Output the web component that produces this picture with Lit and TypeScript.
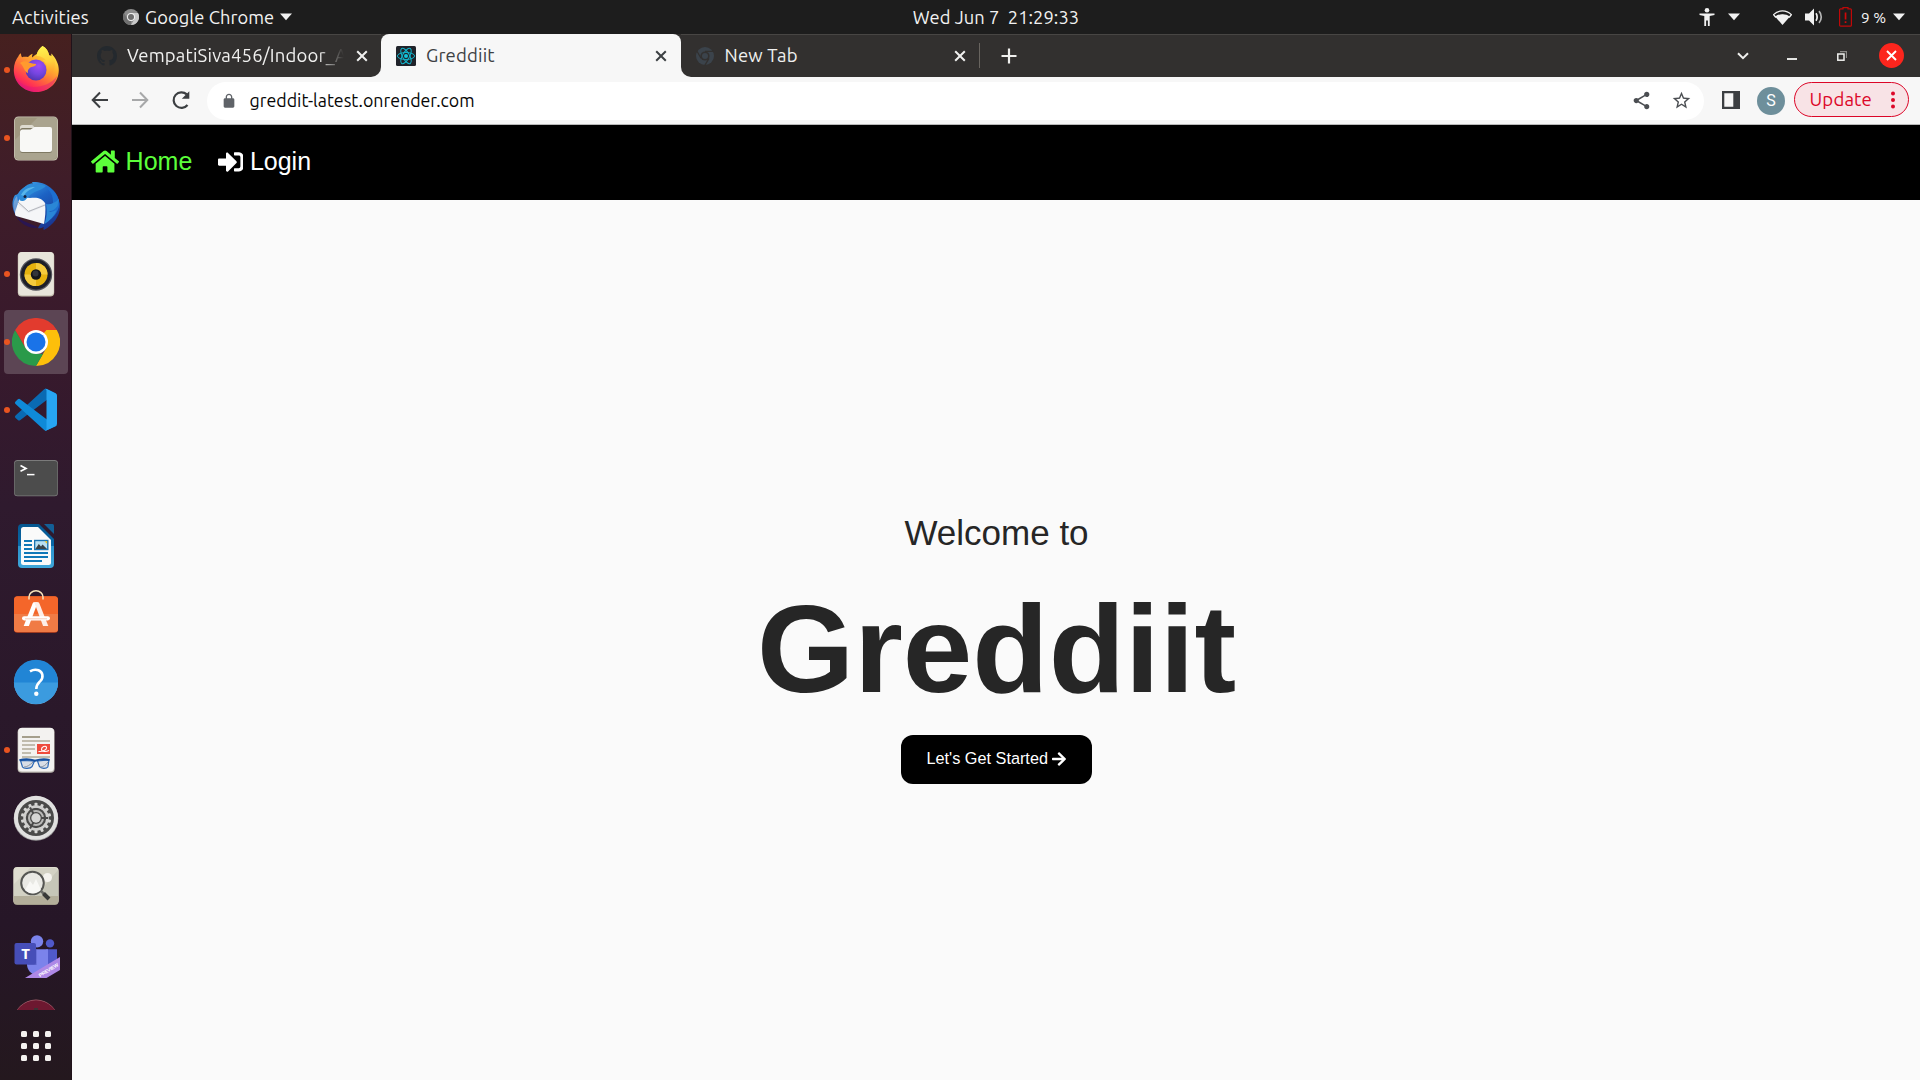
import { LitElement, html, svg, css } from "lit";
import { customElement } from "lit/decorators.js";
import { classMap } from "lit/directives/class-map.js";

const shared = css`
  :host, * { box-sizing: border-box; }
  svg { display: block; flex: none; }
  .ui { font-family: Ubuntu, "Noto Sans", "Open Sans", sans-serif; white-space: pre; }
`;

const triangle = html`<svg class="tri" width="12" height="8" viewBox="0 0 12 8"><path d="M0 .5h12L6 7.2z" fill="#f2f2f2"/></svg>`;

/* ---------- launcher icons, 48 x 48 ---------- */

const firefox = svg`
  <defs>
    <linearGradient id="ffBody" x1=".8" y1=".1" x2=".25" y2="1">
      <stop offset="0" stop-color="#fff44f"/><stop offset=".3" stop-color="#ffb02e"/>
      <stop offset=".58" stop-color="#ff6a3c"/><stop offset=".82" stop-color="#ff2f55"/><stop offset="1" stop-color="#d9127e"/>
    </linearGradient>
    <linearGradient id="ffFlame" x1=".5" y1="0" x2=".6" y2="1">
      <stop offset="0" stop-color="#fff44f"/><stop offset=".5" stop-color="#ffd03b"/><stop offset="1" stop-color="#ff8a2a" stop-opacity=".2"/>
    </linearGradient>
    <radialGradient id="ffGlobe" cx=".62" cy=".3" r=".8">
      <stop offset="0" stop-color="#a04bf5"/><stop offset=".5" stop-color="#7545e0"/><stop offset="1" stop-color="#4a32a8"/>
    </radialGradient>
  </defs>
  <path d="M30.500 0c4 2.200 6 5.500 6.700 9.600 1-.4 1.500.2 2.200.9.500-1 .3-2 0-3C44 12.500 46.800 18 46.800 24 46.800 36.500 37 46 24.300 46 11.500 46 1.800 36.500 1.800 24c0-6 2.200-10.500 4.800-14 .3-.8.6-1.800 2.400-2.700 0 1.600.2 2.700 1 3.900 2-.6 4-.5 6-.1 1.400-1.600 3-2.700 4.700-3.300-.5 1.200-.8 2.400-.5 3.700 1.400-1.800 3-2.800 4.600-3.600C25.500 5 27.800 2.200 30.500 0z" fill="url(#ffBody)"/>
  <circle cx="24" cy="24" r="10.500" fill="url(#ffGlobe)"/>
  <path d="M30.500 0c-3.500 3-5.600 6.200-6 10 4-.2 7.500 1.500 9.500 4.500-1.400-.6-2.500-.7-3.300-.5 6 4.500 5.800 13 .5 18 7-1 11.600-6 11.800-14 .2-3-.8-6.600-3.600-10.500.2 1.200.2 2.200 0 3-.7-.7-1.200-1.300-2.200-.9C36.500 5.500 34.500 2.200 30.500 0z" fill="url(#ffFlame)"/>
  <path d="M8 17c2.500-2 6-2.400 9-.6 2 1 4.600 1 7 1.500.6 1.600-2 2.300-4.300 3-2.300.8-4.600 3-3.600 6.400C12 26 12 20 8 17z" fill="#ff9a2e"/>
  <path d="M2 26c2 9 10 15 20 15 9 0 18-4 23-11-2 10-11 16-21 16C13 46 3.500 38 2 26z" fill="#e3197a" opacity=".45"/>`;

const files = svg`
  <rect x="2" y="2.500" width="44" height="44" rx="4.500" fill="#c9c5b5"/>
  <rect x="2.800" y="3.300" width="42.400" height="42.400" rx="4" fill="#a09880"/>
  <path d="M2.800 26 26 3.300h15a4 4 0 0 1 4 4V41a4 4 0 0 1-4 4H7a4 4 0 0 1-4-4z" fill="#aaa48f"/>
  <path d="M8 13.500a2.500 2.500 0 0 1 2.500-2.500h8c2 0 2.500 0 4 2.500H37V22H8z" fill="#dedbd0"/>
  <rect x="8" y="14" width="32" height="25" rx="2.500" fill="#7f7963"/>
  <path d="M8 18c0-1.400 1-2.500 2.500-2.500h8L22.500 13H38a2 2 0 0 1 2 2v20.500a2.500 2.500 0 0 1-2.500 2.500h-27A2.500 2.500 0 0 1 8 35.500z" fill="#f8f8f6"/>`;

const thunderbird = svg`
  <defs>
    <linearGradient id="tb" x1=".2" y1="0" x2=".8" y2="1">
      <stop offset="0" stop-color="#3fa5e8"/><stop offset=".4" stop-color="#1c62c4"/><stop offset="1" stop-color="#18318c"/>
    </linearGradient>
  </defs>
  <path d="M20 0c13-1 27 8 28 24 .4 9-6 19-16 24-1-1-.5-2 0-3-3 1.500-5 1.500-6 1 1-3 4-5 5-8L4 34C0 27-1 19 3 13c2 0 3-1 4-3 3-4 8-7 14-8z" fill="url(#tb)"/>
  <path d="M28 3c8 2 13 8 13 17 0 6-2 13-8 20 8-3 13-9 14.500-18C46 10 38 4 28 3z" fill="#1e6fd0"/>
  <path d="M34 22c4 1 9-1 13-5l-1.500 7c-2 3-5 5-9 6 3 0 6-1 8-2-2 6-7 11-12 14 2-6 3-12 1.500-20z" fill="#2a86d6"/>
  <path d="M8 15 3 30c0 2 0 3 1 4l28 8c1-6 2-13 1-21-3-5-8-6-15-5z" fill="#f5f6f8"/>
  <path d="M6 20 16.500 29.500 33 23" fill="none" stroke="#9b9da3" stroke-width="1"/>
  <path d="M33.500 21 33 24 16.500 31 5 22l-1 11c-4-7-3-15 1-19L6 20l10.500 9z" fill="#d9dce3" opacity=".4"/>
  <path d="M7 17C7 9 13 2 21 1l-1 3c5-2 10-2 14 0-4 4-8 4-13 7-6 3-7 9-11 8-2 0-2-1-3-2z" fill="#2d8cd8"/>
  <path d="M9 13c3-6 8-8 14-8-5 3-9 4-11 9z" fill="#57b5ea"/>
  <circle cx="13" cy="14.500" r="1.500" fill="#14213f"/>
  <path d="M4 34c4 4 12 7 22 11-1 1-3 1-4 1C14 45 8 41 4 34z" fill="#2a1652"/>`;

const rhythmbox = svg`
  <rect x="5.800" y="2" width="36.400" height="44.500" rx="4" fill="#c8c3b3"/>
  <rect x="6.300" y="2" width="35.400" height="43.200" rx="4" fill="#e8e5db"/>
  <circle cx="24" cy="24.500" r="16.200" fill="#55555d"/>
  <circle cx="24" cy="24.500" r="15" fill="#1d1f28"/>
  <circle cx="24" cy="24.500" r="11.500" fill="#e6b30e"/>
  <path d="M24 13a11.500 11.500 0 0 1 11.500 11.500L24 24.500zM24 36a11.500 11.500 0 0 1-11.500-11.500H24z" fill="#f4cb3d"/>
  <circle cx="24" cy="24.500" r="5.200" fill="#15161a"/>
  <circle cx="23.500" cy="23.500" r="3" fill="#33343a"/>`;

const chrome = svg`
  <path d="M24 24 3.200 12A24 24 0 0 1 44.800 12z" fill="#e23b2e"/>
  <path d="M24 12h20.800A24 24 0 0 1 24 48l10.400-18z" fill="#fdbf0b"/>
  <path d="M3.200 12 13.600 30 24 36h6.900L24 48A24 24 0 0 1 3.200 12z" fill="#2a9a4a"/>
  <path d="M3.200 12 13.600 30l10.400-6 10.400-12z" fill="#e23b2e"/>
  <circle cx="24" cy="24" r="12" fill="#fff"/>
  <circle cx="24" cy="24" r="9.500" fill="#1a73e8"/>`;

const vscode = svg`
  <g transform="translate(3 2.700) scale(.42)">
    <path d="M96.461 10.796 75.857.876a6.230 6.230 0 0 0-7.107 1.207L1.299 63.583a4.170 4.170 0 0 0 .004 6.162l5.510 5.009a4.170 4.170 0 0 0 5.321.237L93.361 13.370c2.725-2.067 6.639-.124 6.639 3.297v-.240a6.250 6.250 0 0 0-3.539-5.631z" fill="#0a6ab3"/>
    <path d="m96.461 89.204-20.604 9.920a6.230 6.230 0 0 1-7.107-1.207L1.299 36.417a4.170 4.170 0 0 1 .004-6.162l5.510-5.009a4.170 4.170 0 0 1 5.321-.237L93.361 86.630c2.725 2.067 6.639.124 6.639-3.297v.240a6.250 6.250 0 0 1-3.539 5.631z" fill="#0f8ad8"/>
    <path d="M75.858 99.126a6.230 6.230 0 0 1-7.108-1.209c2.306 2.306 6.250.673 6.250-2.589V4.672c0-3.262-3.944-4.895-6.250-2.589A6.230 6.230 0 0 1 75.858.874l20.600 9.907A6.250 6.250 0 0 1 100 16.413v67.174a6.250 6.250 0 0 1-3.541 5.633z" fill="#27a5f2"/>
  </g>`;

const terminal = svg`
  <rect x="2" y="6" width="44" height="36.200" rx="3.500" fill="#7b7b7b"/>
  <rect x="2.600" y="7" width="42.800" height="34.400" rx="3" fill="#4c4c4c"/>
  <path d="m8.500 11.500 5.500 2.900-5.500 2.900" fill="none" stroke="#fff" stroke-width="1.700"/>
  <path d="M15 20.600h7.500" stroke="#fff" stroke-width="1.500"/>`;

const writer = svg`
  <defs><linearGradient id="wr" x1="0" y1="0" x2="0" y2="1">
    <stop offset="0" stop-color="#05568f"/><stop offset=".5" stop-color="#0a69a8"/><stop offset=".51" stop-color="#2b93cd"/><stop offset="1" stop-color="#3ea6d9"/>
  </linearGradient></defs>
  <path d="M10 2h17l15 15v25a4 4 0 0 1-4 4H10a4 4 0 0 1-4-4V6a4 4 0 0 1 4-4z" fill="url(#wr)"/>
  <path d="M11.500 5H26l13 13v22.500a2.500 2.500 0 0 1-2.500 2.500h-25A2.500 2.500 0 0 1 9 40.500v-33A2.500 2.500 0 0 1 11.500 5z" fill="#fafafa"/>
  <path d="M32 2h8.500A1.500 1.500 0 0 1 42 3.500V12z" fill="#135f96"/>
  <path d="M12 19h8M12 23h8M12 27h8M12 31h24M12 35h24M12 39h18" stroke="#1078b8" stroke-width="1.900"/>
  <rect x="22" y="17.800" width="14.500" height="10.400" fill="#1a74b2"/>
  <rect x="23.300" y="19.200" width="11.800" height="7.800" fill="#b8dff2"/>
  <path d="m23.300 27 3.500-5 2.200 2.500 1.500-2 4.600 4.500z" fill="#3a444a"/>
  <path d="M32.500 19.200h2.600v2.600z" fill="#f5c211"/>`;

const software = svg`
  <rect x="2" y="6.300" width="44" height="36.500" rx="3.500" fill="#c9481d"/>
  <rect x="2" y="6.300" width="44" height="35.800" rx="3.500" fill="#f4662a"/>
  <path d="M2 24h44v14.600a3.500 3.500 0 0 1-3.500 3.500h-37A3.500 3.500 0 0 1 2 38.600z" fill="#f07b45"/>
  <path d="M17 9.500V7a7 6.200 0 0 1 14 0v2.500" fill="none" stroke="#f7e3bb" stroke-width="1.500"/>
  <path d="M11.700 36h5.200L25.800 12.200h-3.600c-.8 0-1.300.5-1.600 1.200z" fill="#fff"/>
  <path d="M36.300 36h-5.200l-8.900-23.800h3.600c.8 0 1.300.5 1.600 1.200z" fill="#fdeee8"/>
  <rect x="10" y="26.200" width="28" height="4.200" rx="2.100" fill="#fff"/>
  <path d="M13 28.800h22" stroke="#f6cdbc" stroke-width="1"/>`;

const help = svg`
  <circle cx="24" cy="24.300" r="22" fill="#67b5e6"/>
  <circle cx="24" cy="23.700" r="22" fill="#2185d5"/>
  <path d="M2 24.500h44a22 21.500 0 0 1-44 0z" fill="#3b9bdf"/>
  <path d="M18 13.300c3-1.700 6-2 8.500-1 4.500 1.700 5.200 7 2 10.500-2.500 2.600-4.200 4-4.200 8.200" fill="none" stroke="#fff" stroke-width="2.600"/>
  <circle cx="24.300" cy="35.800" r="2.200" fill="#fff"/>`;

const documents = svg`
  <rect x="5.600" y="2.200" width="37" height="44.500" rx="4" fill="#b9b6ae"/>
  <rect x="6.200" y="1.800" width="35.800" height="43.800" rx="4" fill="#f3f2f0"/>
  <path d="M10 11h18" stroke="#a59f8c" stroke-width="2"/>
  <path d="M10 15h28M10 19h13M10 23h13M10 27h9M10 31h28" stroke="#c1bcae" stroke-width="1.800"/>
  <rect x="25" y="18" width="13" height="10" fill="#ee4b3c"/>
  <path d="M26.500 25.500c5 0 8.500-2 8-4.200-.8-2-5-.6-5 2 0 3 5 2.500 7.500 1.200" fill="none" stroke="#fff" stroke-width="1.100"/>
  <path d="M8.500 34.500 10.500 41c1 2 8 1.800 9.500-.3L22.500 35zM25.500 35l2 5.700c1.500 2.100 7 2.100 8.300.3L37 34z" fill="#d9dee6" stroke="#2c68b5" stroke-width="1.200"/>
  <path d="M7.500 34.300c5-1.500 11-1.200 15.500.5 5-1.700 10-2 14.500-.8" fill="none" stroke="#164f9e" stroke-width="2"/>
  <path d="M12 41c3 0 6-2 9-5M28 41c3 0 6-2 8-5" fill="none" stroke="#8b95a3" stroke-width="1"/>`;

const teeth = Array.from({ length: 14 }, (_, i) =>
  svg`<rect x="22.500" y="8.800" width="3" height="5" rx=".8" fill="#d6d6d4" transform=${`rotate(${(i * 360) / 14} 24 24)`}/>`);

const settings = svg`
  <circle cx="24" cy="24.500" r="22.300" fill="#9a9a9a"/>
  <circle cx="24" cy="23.800" r="22" fill="#e1e1e0"/>
  <circle cx="24" cy="24" r="18" fill="#4a4a49"/>
  ${teeth}
  <circle cx="24" cy="24" r="11.500" fill="none" stroke="#cfcfcd" stroke-width="2.600"/>
  <circle cx="24" cy="24" r="7" fill="none" stroke="#b9b9b7" stroke-width="2"/>
  <path d="M28 24h8M22 20.500l-4-7M22 27.500l-4 7" stroke="#4a4a49" stroke-width="2"/>
  <circle cx="24" cy="24" r="4.700" fill="#d6d6d4"/>`;

const imageViewer = svg`
  <rect x="1.400" y="5" width="45.200" height="38" rx="4" fill="#8f8a78"/>
  <rect x="1.400" y="5" width="45.200" height="37" rx="4" fill="#dfddd0"/>
  <path d="M2 22 18 6h24a4 4 0 0 1 4 4v24H2z" fill="#d3d2c4"/>
  <path d="M24 34 46 8v26z" fill="#c6c6b8"/>
  <path d="M1.400 34h45.200v4.500a4 4 0 0 1-4 4H5.400a4 4 0 0 1-4-4z" fill="#b3ae9a"/>
  <circle cx="35.500" cy="15.500" r="4.500" fill="#f4f3ee"/>
  <circle cx="20.500" cy="21" r="11.300" fill="#e9e9e4" stroke="#555653" stroke-width="2"/>
  <path d="m13 28 5-9 3 4 3-6 5 11c-5 5-12 4-16 0z" fill="#f8f8f5"/>
  <path d="m29 29 3 3" stroke="#6a6b68" stroke-width="2.500"/>
  <path d="m31.500 31.500 5.500 5.500" stroke="#383938" stroke-width="4"/>`;

const teams = svg`
  <defs><clipPath id="tmClip"><rect x="0" y="0" width="48" height="48"/></clipPath></defs>
  <circle cx="38" cy="13.400" r="4.200" fill="#5059c9"/>
  <path d="M34 19.300h11V34c0 5-3 8-8 8h-6z" fill="#5059c9"/>
  <circle cx="25" cy="11.400" r="6.200" fill="#7b83eb"/>
  <path d="M15 19.300h21V34c0 6-4 11-10.500 11S15 40 15 34z" fill="#7b83eb"/>
  <path d="M15 19.300h9.500V35H15.300z" fill="#5a62c8"/>
  <rect x="2.500" y="13" width="21.500" height="21.500" rx="2" fill="#464eb8"/>
  <text x="13.500" y="28.600" text-anchor="middle" font-family="Open Sans, Noto Sans, sans-serif" font-size="15" font-weight="700" fill="#fff">T</text>
  <g clip-path="url(#tmClip)">
    <path d="M13 48 48 27v13L34.500 48z" fill="#ae88e6"/>
    <text x="36.500" y="41.800" transform="rotate(-31 36.500 40)" text-anchor="middle" font-family="Liberation Sans, sans-serif" font-size="5" font-weight="700" fill="#fff" textLength="22">PREVIEW</text>
  </g>`;

const hidden = svg`
  <circle cx="24" cy="24" r="22.500" fill="#a2606c"/>
  <circle cx="24" cy="24.700" r="22.500" fill="#6d1830"/>
  <rect x="22" y="10" width="4" height="4" fill="#3a3436"/>`;

interface App { icon: unknown; running?: boolean; active?: boolean; }

const apps: App[] = [
  { icon: firefox, running: true },
  { icon: files, running: true },
  { icon: thunderbird },
  { icon: rhythmbox, running: true },
  { icon: chrome, running: true, active: true },
  { icon: vscode, running: true },
  { icon: terminal },
  { icon: writer },
  { icon: software },
  { icon: help },
  { icon: documents, running: true },
  { icon: settings },
  { icon: imageViewer },
  { icon: teams },
  { icon: hidden },
];

@customElement("launcher-dock")
export class LauncherDock extends LitElement {
  static styles = [shared, css`
    :host {
      display: flex; flex-direction: column; flex: none; width: 72px; height: 1046px;
      background: linear-gradient(#46201f 0, #3f1d29 14%, #38192c 30%, #2f1a2e 45%, #2a182a 65%, #261627 85%, #24181e 100%);
      border-right: 1px solid #20121a;
    }
    .list { height: 976px; padding-top: 4px; overflow: hidden; display: flex; flex-direction: column; gap: 4px; }
    .app { flex: none; height: 64px; margin: 0 3px 0 4px; border-radius: 4px; display: flex; align-items: center; }
    .app.active { background: #5c4554; }
    .dot { width: 6px; height: 6px; border-radius: 3px; margin-right: 2px; }
    .dot.on { background: #e95420; }
    .grid { width: 30px; margin: 21px 0 0 21px; display: grid; grid-template-columns: repeat(3, 6px); gap: 6px; }
    .cell { height: 6px; border-radius: 1.500px; background: #f4f2f0; }
  `];
  render() {
    return html`
      <div class="list">
        ${apps.map((a) => html`
          <div class=${classMap({ app: true, active: !!a.active })}>
            <span class=${classMap({ dot: true, on: !!a.running })}></span>
            <svg width="48" height="48" viewBox="0 0 48 48">${a.icon}</svg>
          </div>`)}
      </div>
      <div class="grid">${Array.from({ length: 9 }, () => html`<span class="cell"></span>`)}</div>`;
  }
}

@customElement("system-bar")
export class SystemBar extends LitElement {
  static styles = [shared, css`
    :host { display: grid; grid-template-columns: 1fr auto 1fr; align-items: center; height: 34px; background: #1d1d1d; color: #f2f2f2; font-size: 18.300px; }
    .side { display: flex; align-items: center; height: 34px; }
    .left { padding-left: 12px; }
    .right { justify-content: flex-end; padding-right: 15px; }
    .activities { width: 111px; letter-spacing: .200px; }
    .app { margin: 0 6px 0 6px; letter-spacing: .080px; }
    .clock { padding-left: 72px; letter-spacing: .060px; }
    .battery-text { font-size: 15.300px; margin: 1px 7px 0 9px; }
    .a11y { margin-right: 13px; }
    .right .tri { margin-right: 0; }
    .wifi { margin: 0 13px 0 33px; }
    .batt { margin-left: 14px; }
  `];
  render() {
    return html`
      <div class="side left ui">
        <span class="activities">Activities</span>
        <svg width="16" height="16" viewBox="0 0 16 16">
          <circle cx="8" cy="8" r="8" fill="#8c8c8c"/><path d="M8 4h7A8 8 0 0 1 8 16l3.500-6z" fill="#c9c9c9"/><path d="M1 4l3.500 6L8 12v4A8 8 0 0 1 1 4z" fill="#707070"/>
          <circle cx="8" cy="8" r="4" fill="#f2f2f2"/><circle cx="8" cy="8" r="3" fill="#6d6d6d"/>
        </svg>
        <span class="app">Google Chrome</span>${triangle}
      </div>
      <span class="clock ui">Wed Jun 7  21:29:33</span>
      <div class="side right ui">
        <svg class="a11y" width="16" height="18" viewBox="0 0 16 18"><circle cx="8" cy="2.300" r="2.300" fill="#f2f2f2"/><path d="M.5 5.500h15v1.500L10.700 8v10H8.900v-5.500H7.100V18H5.300V8L.5 7z" fill="#f2f2f2"/></svg>
        ${triangle}
        <svg class="wifi" width="19" height="16" viewBox="0 0 19 16"><path d="M9.500 5.800c-2.900 0-5 .8-7 2.200l7 8 7-8c-2-1.400-4.100-2.200-7-2.200z" fill="#f2f2f2"/><path d="M.6 5.600C3 3.200 6 1.800 9.500 1.800S16 3.200 18.400 5.600L16.500 8c-2-1.500-4.200-2.200-7-2.200S4.500 6.500 2.500 8z" fill="none" stroke="#f2f2f2" stroke-width="1.300"/></svg>
        <svg width="20" height="18" viewBox="0 0 20 18"><path d="M0 5.500h4l5-5v17l-5-5H0z" fill="#f2f2f2"/><path d="M11 5.200c1.500 2 1.500 5.600 0 7.600" fill="none" stroke="#f2f2f2" stroke-width="1.700"/><path d="M14 3.200c3 3.200 3 8.400 0 11.600" fill="none" stroke="#b5b5b5" stroke-width="1.700"/></svg>
        <svg class="batt" width="13" height="20" viewBox="0 0 13 20"><path d="M4 1.800V.6h5v1.200h2.400c.6 0 1 .4 1 1v15.400c0 .6-.4 1-1 1H1.600c-.6 0-1-.4-1-1V2.800c0-.6.4-1 1-1z" fill="none" stroke="#c00808" stroke-width="1.200"/><path d="M5.700 5.500h1.700v7H5.700zM5.700 14.300h1.700V16H5.700z" fill="#d00808"/></svg>
        <span class="battery-text">9 %</span>${triangle}
      </div>`;
  }
}

const cross = html`<svg class="cross" width="12" height="12" viewBox="0 0 12 12"><path d="m1.200 1.200 9.600 9.600M10.800 1.200l-9.600 9.600" fill="none" stroke="currentColor" stroke-width="2"/></svg>`;

@customElement("browser-tabs")
export class BrowserTabs extends LitElement {
  static styles = [shared, css`
    :host { display: flex; height: 43px; background: #f7f7f7; font-size: 18.500px; letter-spacing: .180px; color: #f0f0ef; }
    .tab { display: flex; align-items: center; height: 43px; }
    .dark { background: #32302f; border-top: 1px solid #484644; padding-bottom: 1px; }
    .first { width: 309px; padding-left: 25px; border-bottom-right-radius: 10px; }
    .active { width: 300px; padding: 0 15px; color: #3c4043; border-radius: 8px 8px 0 0; background: #f7f7f7; }
    .corner { background: linear-gradient(#32302f 50%, #f7f7f7 50%); height: 43px; display: flex; }
    .rest { flex: 1; padding: 0 16px 1px 14px; border-bottom-left-radius: 10px; display: flex; align-items: center; }
    .title { flex: none; margin: -1px 0 0 10px; overflow: hidden; line-height: 30px; }
    .first .title { width: 219px; margin-right: 10px; -webkit-mask-image: linear-gradient(90deg, #000 87%, transparent 99%); mask-image: linear-gradient(90deg, #000 87%, transparent 99%); }
    .active .title { width: 229px; }
    .rest .title { width: 229px; margin-left: 9.500px; }
    .divider { width: 1px; height: 25px; background: #68645f; margin: 0 21px 0 13px; }
    .controls { margin-left: auto; display: flex; align-items: center; }
    .min { width: 10px; height: 2px; background: #e4e4e2; margin: 7px 40px 0 38px; }
    .close { margin-left: 32px; }
  `];
  render() {
    return html`
      <div class="tab dark first">
        <svg width="20" height="20" viewBox="0 0 16 16"><path fill="#24292e" d="M8 0C3.580 0 0 3.580 0 8c0 3.540 2.290 6.530 5.470 7.590.4.070.55-.170.55-.380 0-.190-.010-.820-.010-1.490-2.010.370-2.530-.490-2.690-.940-.090-.230-.480-.980-.820-1.170-.280-.150-.680-.520-.010-.530.630-.010 1.080.580 1.230.820.720 1.210 1.870.870 2.330.660.070-.520.280-.870.510-1.070-1.780-.200-3.640-.890-3.640-3.950 0-.870.310-1.590.820-2.150-.080-.200-.360-1.020.080-2.120 0 0 .670-.210 2.200.820.640-.180 1.320-.270 2-.270s1.360.090 2 .270c1.530-1.040 2.200-.820 2.200-.820.440 1.100.160 1.920.080 2.120.510.560.820 1.270.820 2.150 0 3.070-1.870 3.750-3.650 3.950.290.250.540.730.540 1.480 0 1.070-.010 1.930-.010 2.200 0 .210.150.460.550.380A8.010 8.010 0 0 0 16 8c0-4.420-3.580-8-8-8z"/></svg>
        <span class="title ui">VempatiSiva456/Indoor_A</span>${cross}
      </div>
      <div class="corner">
        <div class="tab active">
          <svg width="20" height="20" viewBox="0 0 20 20"><rect width="20" height="20" rx="1.500" fill="#20232a"/>
            <g fill="none" stroke="#12b5cb" stroke-width="1"><ellipse cx="10" cy="10" rx="8.600" ry="3.500"/><ellipse cx="10" cy="10" rx="8.600" ry="3.500" transform="rotate(60 10 10)"/><ellipse cx="10" cy="10" rx="8.600" ry="3.500" transform="rotate(120 10 10)"/></g><circle cx="10" cy="10" r="2" fill="#12c4dc"/></svg>
          <span class="title ui">Greddiit</span>${cross}
        </div>
      </div>
      <div class="rest dark">
        <svg width="20" height="20" viewBox="0 0 20 20"><circle cx="10" cy="10" r="9" fill="#3b434b"/><circle cx="10" cy="10" r="4.600" fill="#32302f"/><circle cx="10" cy="10" r="3" fill="#3b434b"/><path d="M10 5.400h8.200M6 12.300 2 5.300M14 12.300l-4.200 7" stroke="#32302f" stroke-width="1.300"/></svg>
        <span class="title ui">New Tab</span>${cross}
        <span class="divider"></span>
        <svg width="16" height="16" viewBox="0 0 16 16"><path d="M8 .5v15M.5 8h15" stroke="#f0f0ee" stroke-width="2.200"/></svg>
        <div class="controls">
          <svg width="12" height="8" viewBox="0 0 12 8"><path d="m1 1.200 5 5 5-5" fill="none" stroke="#f0f0ee" stroke-width="2"/></svg>
          <span class="min"></span>
          <svg width="10" height="10" viewBox="0 0 10 10"><path d="M3 .6h6.500V7" fill="none" stroke="#8c8a88" stroke-width="1.200"/><rect x=".8" y="3" width="6.200" height="6.200" fill="none" stroke="#f0f0ee" stroke-width="1.500"/></svg>
          <svg class="close" width="25" height="25" viewBox="0 0 25 25"><circle cx="12.500" cy="12.500" r="12.500" fill="#fc251d"/><path d="m8 8 9 9M17 8l-9 9" stroke="#fff" stroke-width="1.900"/></svg>
        </div>
      </div>`;
  }
}

@customElement("browser-toolbar")
export class BrowserToolbar extends LitElement {
  static styles = [shared, css`
    :host { display: flex; align-items: center; height: 48px; padding: 0 11px 0 15.500px; background: #f7f7f7; border-bottom: 1px solid #b9b9b9; }
    .nav { display: flex; align-items: center; gap: 16px; width: 119.500px; margin-bottom: 1px; }
    .box { flex: 1; height: 38px; border-radius: 19px; background: #fff; display: flex; align-items: center; padding: 0 12px 0 14px; }
    .url { flex: 1; margin: -1px 0 0 12.500px; font-size: 17.800px; color: #060606; }
    .share { margin-right: 19px; }
    .panel { margin: 0 17px 1px 18px; }
    .avatar { width: 28px; height: 28px; border-radius: 14px; background: #6e8f9b; color: #fff; font: 16px Roboto, sans-serif; text-align: center; line-height: 28px; margin-right: 9px; }
    .update { width: 115px; height: 35px; margin-bottom: 2px; border: 1.500px solid #dc0628; border-radius: 18px; background: #f8e3e6; color: #dc0628; font-size: 18.600px; letter-spacing: .150px; display: flex; align-items: center; justify-content: space-between; padding: 0 13.500px 0 14.500px; }
  `];
  render() {
    return html`
      <div class="nav">
        <svg width="24" height="24" viewBox="0 0 24 24"><path d="M20 12H5M12 4.500 4.700 12l7.300 7.500" fill="none" stroke="#3c3f42" stroke-width="2"/></svg>
        <svg width="24" height="24" viewBox="0 0 24 24"><path d="M4 12h15M12 4.500l7.300 7.500-7.300 7.500" fill="none" stroke="#a7a8a9" stroke-width="2"/></svg>
        <svg width="26" height="26" viewBox="0 0 26 26"><path d="M19.500 18A7.800 7.800 0 1 1 18.800 7.400" fill="none" stroke="#3c3f42" stroke-width="2.200"/><path d="M21.300 4.300v7.500h-7.500z" fill="#3c3f42"/></svg>
      </div>
      <div class="box">
        <svg width="16" height="16" viewBox="0 0 24 24"><path fill="#5f6368" d="M18 8h-1V6c0-2.760-2.240-5-5-5S7 3.240 7 6v2H6c-1.100 0-2 .9-2 2v10c0 1.100.9 2 2 2h12c1.100 0 2-.9 2-2V10c0-1.100-.9-2-2-2zM9 6c0-1.660 1.340-3 3-3s3 1.340 3 3v2H9V6z"/></svg>
        <span class="url ui">greddit-latest.onrender.com</span>
        <svg class="share" width="21" height="21" viewBox="0 0 24 24"><path fill="#4b4e52" d="M18 16.080c-.760 0-1.440.3-1.960.770L8.910 12.700c.050-.230.090-.460.090-.7s-.040-.470-.090-.7l7.050-4.110c.540.5 1.250.810 2.040.810 1.660 0 3-1.340 3-3s-1.340-3-3-3-3 1.340-3 3c0 .240.040.470.090.7L8.040 9.810C7.500 9.310 6.790 9 6 9c-1.660 0-3 1.340-3 3s1.340 3 3 3c.790 0 1.500-.310 2.040-.810l7.120 4.160c-.050.210-.080.430-.080.650 0 1.610 1.310 2.920 2.920 2.920s2.920-1.310 2.920-2.920-1.310-2.920-2.920-2.920z"/></svg>
        <svg width="21" height="21" viewBox="0 0 24 24"><path fill="#4b4e52" d="M22 9.240l-7.190-.620L12 2 9.190 8.630 2 9.240l5.460 4.730L5.820 21 12 17.270 18.180 21l-1.630-7.030L22 9.240zM12 15.400l-3.760 2.270 1-4.280-3.320-2.880 4.380-.380L12 6.100l1.710 4.040 4.380.380-3.320 2.880 1 4.280L12 15.400z"/></svg>
      </div>
      <svg class="panel" width="18" height="18" viewBox="0 0 18 18"><path fill="#3c3f42" fill-rule="evenodd" d="M0 0h18v18H0zM2.300 2.300v13.400h9V2.300z"/></svg>
      <div class="avatar">S</div>
      <div class="update ui"><span>Update</span><svg width="4" height="18" viewBox="0 0 4 18"><g fill="#dc0628"><circle cx="2" cy="2.500" r="2"/><circle cx="2" cy="9" r="2"/><circle cx="2" cy="15.500" r="2"/></g></svg></div>`;
  }
}

@customElement("greddiit-page")
export class GreddiitPage extends LitElement {
  static styles = [shared, css`
    :host { display: flex; flex-direction: column; flex: 1; background: #fafafa; font-family: "Liberation Sans", Arial, sans-serif; color: #262626; }
    .navbar { height: 75px; background: #000; display: flex; align-items: center; gap: 25.500px; padding: 0 0 2px 19px; font-size: 25px; }
    .link { display: flex; align-items: center; gap: 6.500px; color: #fff; }
    .home { color: #5cff3b; }
    .hero { flex: 1; display: flex; flex-direction: column; align-items: center; padding-top: 313px; }
    .welcome { font-size: 35px; line-height: 40px; padding-left: 1px; }
    .brand { font-size: 125px; line-height: 144px; font-weight: 700; margin: 24px 0 14px; padding-left: 1px; }
    .start { width: 191px; height: 49px; border-radius: 12px; background: #000; color: #fff; font-size: 16.250px; display: flex; align-items: center; justify-content: center; gap: 4.500px; padding: 0 0 2px 1px; }
  `];
  render() {
    return html`
      <nav class="navbar">
        <span class="link home"><svg width="28.100" height="25" viewBox="0 0 576 512"><path fill="currentColor" d="M280.370 148.260L96 300.110V464a16 16 0 0 0 16 16l112.060-.290a16 16 0 0 0 15.920-16V368a16 16 0 0 1 16-16h64a16 16 0 0 1 16 16v95.640a16 16 0 0 0 16 16.050L464 480a16 16 0 0 0 16-16V300L295.670 148.260a12.190 12.190 0 0 0-15.300 0zM571.600 251.470L488 182.560V44.050a12 12 0 0 0-12-12h-56a12 12 0 0 0-12 12v72.610L318.470 43a48 48 0 0 0-61 0L4.340 251.470a12 12 0 0 0-1.600 16.900l25.500 31A12 12 0 0 0 45.150 301l235.220-193.740a12.190 12.190 0 0 1 15.300 0L530.900 301a12 12 0 0 0 16.900-1.600l25.500-31a12 12 0 0 0-1.700-16.930z"/></svg><span>Home</span></span>
        <span class="link"><svg width="25.600" height="25.600" viewBox="0 0 512 512"><path fill="currentColor" d="M416 448h-84c-6.600 0-12-5.400-12-12v-40c0-6.600 5.400-12 12-12h84c17.700 0 32-14.300 32-32V160c0-17.700-14.300-32-32-32h-84c-6.600 0-12-5.400-12-12V76c0-6.600 5.400-12 12-12h84c53 0 96 43 96 96v192c0 53-43 96-96 96zm-47-201L201 79c-15-15-41-4.500-41 17v96H24c-13.300 0-24 10.700-24 24v96c0 13.300 10.700 24 24 24h136v96c0 21.500 26 32 41 17l168-168c9.300-9.400 9.300-24.600 0-34z"/></svg><span>Login</span></span>
      </nav>
      <main class="hero">
        <div class="welcome">Welcome to</div>
        <div class="brand">Greddiit</div>
        <div class="start"><span>Let's Get Started</span><svg width="14" height="16" viewBox="0 0 448 512"><path fill="currentColor" d="M190.500 66.900l22.200-22.200c9.400-9.400 24.600-9.400 33.900 0L441 239c9.400 9.400 9.400 24.600 0 33.900L246.600 467.300c-9.400 9.400-24.600 9.400-33.900 0l-22.200-22.200c-9.500-9.500-9.300-25 .4-34.300L311.400 296H24c-13.300 0-24-10.700-24-24v-32c0-13.300 10.700-24 24-24h287.400L190.900 101.200c-9.800-9.300-10-24.800-.4-34.300z"/></svg></div>
      </main>`;
  }
}

@customElement("app-root")
export class AppRoot extends LitElement {
  static styles = css`
    :host { display: flex; flex-direction: column; width: 1920px; height: 1080px; overflow: hidden; }
    .body { display: flex; flex: 1; }
    .window { flex: 1; display: flex; flex-direction: column; }
  `;
  render() {
    return html`
      <system-bar></system-bar>
      <div class="body">
        <launcher-dock></launcher-dock>
        <div class="window">
          <browser-tabs></browser-tabs>
          <browser-toolbar></browser-toolbar>
          <greddiit-page></greddiit-page>
        </div>
      </div>`;
  }
}
